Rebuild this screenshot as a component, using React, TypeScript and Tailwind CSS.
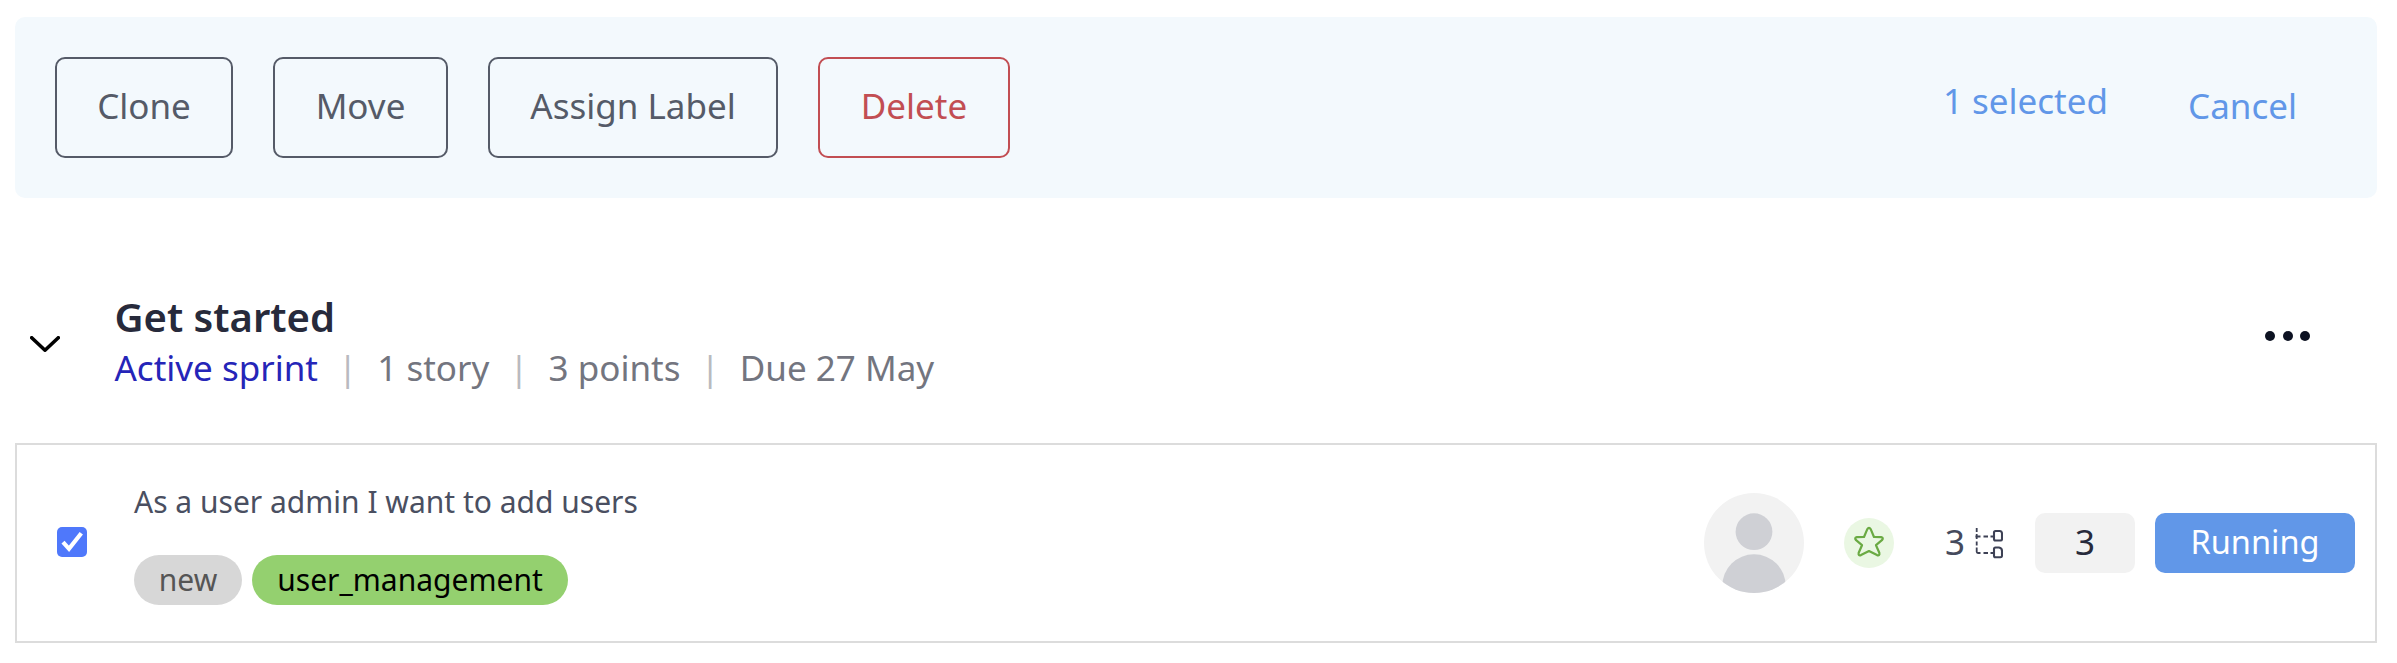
import React from "react";

const ACTIONS = [
  { label: "Clone", width: "w-[178px]", tone: "border-[#555b68] text-[#555b68]" },
  { label: "Move", width: "w-[175px]", tone: "border-[#555b68] text-[#555b68]" },
  { label: "Assign Label", width: "w-[290px]", tone: "border-[#555b68] text-[#555b68]" },
  { label: "Delete", width: "w-[192px]", tone: "border-[#c24e53] text-[#c24e53]" },
];

function ActionBar() {
  return (
    <div className="flex h-[181px] items-center gap-10 rounded-[10px] bg-[#f3f9fd] pl-10 pr-20">
      {ACTIONS.map((a) => (
        <button
          key={a.label}
          className={`h-[101px] shrink-0 whitespace-nowrap rounded-[10px] border-2 pb-1 text-[35px] leading-[48px] ${a.width} ${a.tone}`}
        >
          {a.label}
        </button>
      ))}
      <div className="ml-auto flex items-center gap-[80px] pb-[4px] text-[35px] leading-[48px] text-[#6197e8]">
        <span className="pb-[10px]">1 selected</span>
        <button>Cancel</button>
      </div>
    </div>
  );
}

function Separator() {
  return <span className="text-[#b9babf]">|</span>;
}

function SprintHeader() {
  return (
    <div className="mt-[92px] flex h-[153px]">
      <svg className="ml-[15px] mt-[46px] h-[16px] w-[30px]" viewBox="0 0 30 16" fill="none">
        <path d="M1.7 1.7 15 14.2 28.3 1.7" stroke="#000" strokeWidth="3.6" strokeLinecap="round" strokeLinejoin="round" />
      </svg>
      <div className="ml-[54.5px] flex flex-col">
        <h2 className="text-[40px] font-semibold leading-[54px] text-[#272a3b]">Get started</h2>
        <div className="flex gap-[20px] whitespace-nowrap text-[35px] leading-[48px] text-[#73757f]">
          <span className="text-[#2525b8]">Active sprint</span>
          <Separator />
          <span>1 story</span>
          <Separator />
          <span>3 points</span>
          <Separator />
          <span>Due 27 May</span>
        </div>
      </div>
      <div className="ml-auto mr-[67px] mt-[41px] flex h-[10px] gap-[7.5px]">
        <i className="size-[10px] rounded-full bg-[#0d1222]" />
        <i className="size-[10px] rounded-full bg-[#0d1222]" />
        <i className="size-[10px] rounded-full bg-[#0d1222]" />
      </div>
    </div>
  );
}

function Checkbox() {
  return (
    <svg className="size-[30px] shrink-0" viewBox="0 0 30 30">
      <rect width="30" height="30" rx="5" fill="#4f78fb" />
      <path d="M6 15.2 12 21.8 24.3 6.3" fill="none" stroke="#fff" strokeWidth="4.2" />
    </svg>
  );
}

function Avatar() {
  return (
    <svg className="size-[100px] shrink-0" viewBox="0 0 100 100">
      <defs>
        <clipPath id="avatar-clip">
          <circle cx="50" cy="50" r="50" />
        </clipPath>
      </defs>
      <circle cx="50" cy="50" r="50" fill="#f2f2f2" />
      <g clipPath="url(#avatar-clip)" fill="#cfd0d5">
        <circle cx="50" cy="38.7" r="18.4" />
        <circle cx="50" cy="93" r="31.7" />
      </g>
    </svg>
  );
}

function StarBadge() {
  return (
    <svg className="ml-10 size-[50px] shrink-0" viewBox="0 0 50 50">
      <circle cx="25" cy="25" r="25" fill="#eaf7e3" />
      <path
        d="M23.2 11.4Q25 8.4 26.8 11.4L30 19L37.2 19.2Q40 19.8 37.9 22.2L32 27.2L35.3 34.8Q36 38 33 37.1L25 33L17 37.1Q14 38 14.7 34.8L18 27.2L12.1 22.2Q10 19.8 12.8 19.2L20 19Z"
        fill="none"
        stroke="#6aaa43"
        strokeWidth="2.2"
        strokeLinejoin="round"
      />
    </svg>
  );
}

function SubtasksIcon() {
  return (
    <svg className="h-[32px] w-[28px] shrink-0" viewBox="0 0 28 32" fill="none" stroke="#3d4155">
      <path d="M1.7 1V5M1.7 7V12M1.7 14.5V18.5M1.7 20.5V24.8Q1.7 26 3 26H5.5" strokeWidth="1.8" />
      <path d="M0.5 9.5H5.5M8.5 9.5H13M15.5 9.5H20M8.5 26H13M15.5 26H20" strokeWidth="1.8" />
      <path d="M20.5 4H25Q27 4.2 27 6.5V12Q27 13.5 25.5 13.5H20.5Q19 13.5 19 12V5.5Q19 4 20.5 4Z" strokeWidth="2.1" />
      <path d="M20.5 20.5H24Q27 21 27 24V28.7Q27 30.2 25.5 30.2H20.5Q19 30.2 19 28.7V22Q19 20.5 20.5 20.5Z" strokeWidth="2.1" />
    </svg>
  );
}

function StoryRow() {
  return (
    <div className="flex h-[200px] items-center border-2 border-[#dcdcdc] pl-10 pr-5">
      <div className="mb-[2px]">
        <Checkbox />
      </div>
      <div className="-mb-px ml-[47px] flex flex-col items-start">
        <p className="text-[30px] leading-[40px] text-[#4a4f61]">As a user admin I want to add users</p>
        <div className="mt-[33px] flex gap-[10px] text-[30px] leading-[50px]">
          <span className="h-[50px] w-[108px] rounded-full bg-[#d7d7d7] text-center text-[#555]">new</span>
          <span className="h-[50px] w-[316px] rounded-full bg-[#94d06f] text-center text-black">user_management</span>
        </div>
      </div>
      <div className="ml-auto flex items-center">
        <Avatar />
        <StarBadge />
        <span className="ml-[51px] pb-[2px] text-[35px] leading-[48px] text-[#454a5c]">3</span>
        <span className="ml-[10px] mr-[32px]">
          <SubtasksIcon />
        </span>
        <span className="h-[60px] w-[100px] rounded-[10px] bg-[#f2f2f2] text-center text-[35px] leading-[58px] text-[#272a3b]">3</span>
        <button className="ml-5 h-[60px] w-[200px] rounded-[10px] bg-[#6197e8] pb-[2px] text-[32.5px] leading-[58px] text-white">
          Running
        </button>
      </div>
    </div>
  );
}

export default function App() {
  return (
    <main className="h-[663px] w-[2397px] bg-white pl-[15px] pr-5 pt-[17px] font-['Noto_Sans',sans-serif]">
      <ActionBar />
      <SprintHeader />
      <StoryRow />
    </main>
  );
}
